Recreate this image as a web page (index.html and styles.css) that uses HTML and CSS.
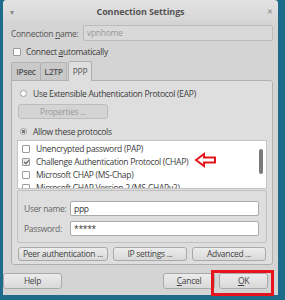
FILE: index.html
```html
<!DOCTYPE html>
<html lang="en">
<head>
    <meta charset="UTF-8">
    <title>Connection Settings</title>
    <link rel="stylesheet" href="styles.css">
</head>
<body>
    <div class="window">
        <div class="titlebar">
            <span class="menu">&#9662;</span>
            <span class="title">Connection Settings</span>
            <span class="close">&#10005;</span>
        </div>

        <div class="content">
            <div class="name-row">
                <span class="label">Connection <u>n</u>ame:</span>
                <div class="field disabled">vpnhome</div>
            </div>

            <div class="check-row">
                <span class="checkbox"></span>
                <span>Connect <u>a</u>utomatically</span>
            </div>

            <div class="tabs">
                <span class="tab ipsec">IPsec</span>
                <span class="tab l2tp">L2TP</span>
                <span class="tab active">PPP</span>
            </div>

            <div class="panel">
                <div class="radio-row first">
                    <span class="radio"></span>
                    <span>Use Extensible Authentication Protocol (EAP)</span>
                </div>
                <div class="btn props">Properties ...</div>
                <div class="radio-row">
                    <span class="radio checked"></span>
                    <span>Allow these protocols</span>
                </div>

                <div class="list">
                    <div class="list-row"><span class="checkbox"></span>Unencrypted password (PAP)</div>
                    <div class="list-row"><span class="checkbox ticked"></span>Challenge Authentication Protocol (CHAP)</div>
                    <div class="list-row"><span class="checkbox"></span>Microsoft CHAP (MS-Chap)</div>
                    <div class="list-row"><span class="checkbox"></span>Microsoft CHAP Version 2 (MS-CHAPv2)</div>
                    <div class="scrollbar"></div>
                </div>

                <div class="auth">
                    <div class="auth-row">
                        <span class="auth-label">User name:</span>
                        <div class="field">ppp</div>
                    </div>
                    <div class="auth-row">
                        <span class="auth-label">Password:</span>
                        <div class="field">*****</div>
                    </div>
                </div>

                <div class="btn-row">
                    <div class="btn peer">Peer authentication ...</div>
                    <div class="btn ip">IP settings ...</div>
                    <div class="btn adv">Advanced ...</div>
                </div>
            </div>
        </div>

        <div class="footer">
            <div class="btn help">Help</div>
            <div class="spacer"></div>
            <div class="btn cancel"><u>C</u>ancel</div>
            <div class="btn ok"><u>O</u>K</div>
        </div>

        <svg class="arrow" width="24" height="16" viewBox="0 0 24 16">
            <path d="M2 8 L10 2 L10 5.5 L21 5.5 L21 10.5 L10 10.5 L10 14 Z" fill="#fff" stroke="#e8141c" stroke-width="2" stroke-linejoin="miter"/>
        </svg>
        <div class="highlight"></div>
    </div>
</body>
</html>
```

FILE: styles.css
```css
* {
    box-sizing: border-box;
}

body {
    margin: 0;
    background-color: #1f6b8b;
    font-family: "Open Sans", sans-serif;
    font-size: 8.5px;
    letter-spacing: -0.3px;
    color: #3c3c3c;
    height: 300px;
    overflow: hidden;
    white-space: nowrap;
}

.window {
    position: relative;
    width: 275px;
    height: 295px;
    margin-left: 3px;
    background: #d4d4d4;
    border-radius: 4px 4px 0 0;
}

.titlebar {
    height: 22px;
    display: flex;
    align-items: center;
    justify-content: space-between;
    padding: 0 5px 0 7px;
    background: linear-gradient(#e2e2e2, #d6d6d6);
    border-radius: 4px 4px 0 0;
}

.title {
    font-weight: bold;
    color: #555;
    font-size: 9px;
    letter-spacing: -0.1px;
}

.menu {
    color: #888;
    font-size: 8px;
}

.close {
    color: #999;
    font-size: 7px;
    font-weight: bold;
}

.content {
    padding: 0 5px 0 8px;
}

.name-row {
    display: flex;
    align-items: center;
    margin-top: 3px;
    height: 16px;
}

.label {
    width: 72px;
    color: #555;
}

.field {
    flex: 1;
    height: 15px;
    line-height: 13px;
    background: #fff;
    border: 1px solid #aaa;
    border-radius: 2px;
    padding-left: 3px;
    color: #333;
}

.name-row .field {
    height: 16px;
    line-height: 14px;
}

.field.disabled {
    background: #d9d9d9;
    border-color: #bcbcbc;
    color: #999;
}

.check-row {
    display: flex;
    align-items: center;
    gap: 5px;
    height: 11px;
    margin-top: 5px;
    padding-left: 2px;
}

.checkbox {
    width: 8px;
    height: 8px;
    border: 1px solid #9a9a9a;
    border-radius: 1px;
    background: #fff;
    flex: none;
    position: relative;
}

.checkbox.ticked {
    background: #e8e8e8;
}

.checkbox.ticked::after {
    content: "";
    position: absolute;
    left: 2px;
    top: 0;
    width: 2px;
    height: 4px;
    border: solid #555;
    border-width: 0 1px 1px 0;
    transform: rotate(45deg);
}

.tabs {
    display: flex;
    align-items: flex-end;
    margin-top: 4px;
    height: 19px;
}

.tab {
    height: 18px;
    line-height: 17px;
    text-align: center;
    background: #c9c9c9;
    border: 1px solid #b0b0b0;
    border-bottom: none;
    border-radius: 2px 2px 0 0;
    color: #555;
    font-weight: 600;
}

.ipsec {
    width: 30px;
}

.l2tp {
    width: 26px;
    border-left: none;
}

.tab.active {
    width: 24px;
    height: 20px;
    line-height: 19px;
    margin-left: 1px;
    margin-bottom: -1px;
    background: #dedede;
    position: relative;
    z-index: 1;
    font-weight: normal;
}

.panel {
    height: 185px;
    background: #dedede;
    border: 1px solid #b0b0b0;
    border-radius: 0 3px 3px 3px;
    padding: 0 5px;
}

.radio-row {
    display: flex;
    align-items: center;
    gap: 6px;
    height: 12px;
    margin-top: 6px;
    padding-left: 3px;
}

.radio {
    width: 7px;
    height: 7px;
    border: 1px solid #a0a0a0;
    border-radius: 50%;
    background: #fff;
    flex: none;
}

.radio.checked {
    background: radial-gradient(circle, #777 0 1.5px, #e4e4e4 2px);
}

.btn {
    height: 14px;
    line-height: 12px;
    text-align: center;
    border: 1px solid #a9a9a9;
    border-radius: 3px;
    background: linear-gradient(#ececec, #d9d9d9);
    color: #444;
}

.props {
    width: 90px;
    height: 15px;
    line-height: 13px;
    margin: 5px 0 0 1px;
    color: #9a9a9a;
    background: #d4d4d4;
    border-color: #bdbdbd;
}

.list {
    position: relative;
    height: 49px;
    margin-top: 3px;
    background: #fff;
    border: 1px solid #c4c4c4;
    overflow: hidden;
    padding-top: 1px;
}

.list-row {
    display: flex;
    align-items: center;
    gap: 6px;
    height: 13px;
    padding-left: 4px;
}

.scrollbar {
    position: absolute;
    right: 3px;
    top: 8px;
    width: 4px;
    height: 25px;
    border-radius: 2px;
    background: #7a7a7a;
}

.auth {
    margin-top: 1px;
    height: 53px;
    border: 1px solid #c0c0c0;
    border-radius: 2px;
    padding: 10px 7px 0 6px;
}

.auth-row {
    display: flex;
    align-items: center;
    height: 15px;
    margin-bottom: 5px;
}

.auth-label {
    width: 46px;
    color: #666;
}

.btn-row {
    display: flex;
    gap: 5px;
    margin-top: 4px;
    padding-left: 1px;
}

.peer {
    width: 90px;
}

.ip {
    width: 74px;
}

.adv {
    width: 74px;
}

.footer {
    display: flex;
    gap: 4px;
    margin-top: 8px;
}

.spacer {
    flex: 1;
}

.help,
.cancel,
.ok {
    height: 16px;
    line-height: 14px;
}

.help {
    width: 59px;
}

.cancel {
    width: 52px;
}

.ok {
    width: 49px;
    margin-right: 10px;
}

.arrow {
    position: absolute;
    left: 191px;
    top: 152px;
}

.highlight {
    position: absolute;
    left: 208px;
    top: 270px;
    width: 63px;
    height: 26px;
    border: 3px solid #e8141c;
}
```
